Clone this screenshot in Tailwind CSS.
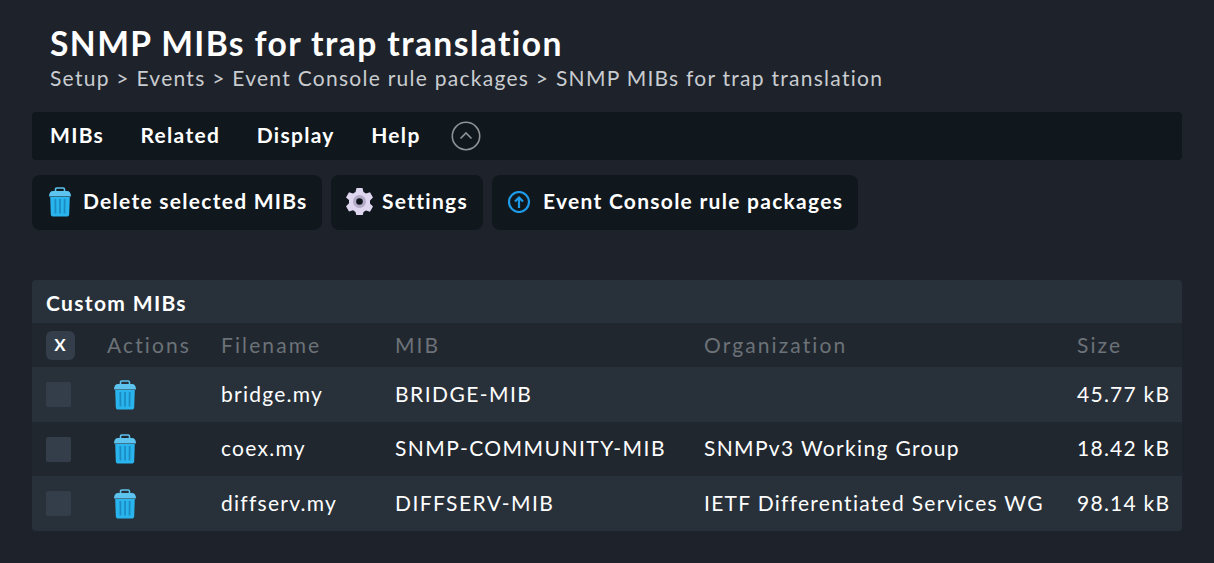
<!DOCTYPE html>
<html lang="en">
  <head>
    <meta charset="UTF-8" />
    <title>SNMP MIBs for trap translation</title>
    <script src="https://cdn.jsdelivr.net/npm/@tailwindcss/browser@4"></script>
  </head>
  <body class="bg-[#1e232b] h-[563px] overflow-hidden font-['Lato',sans-serif] text-white">
    <svg class="hidden">
      <symbol id="trash" viewBox="0 0 24 30">
        <path d="M7.500 4.500V2.400C7.500 1.600 8 1 8.800 1h6.400c.8 0 1.300.6 1.300 1.400v2.100" fill="none" stroke="#5cc4ef" stroke-width="1.600" />
        <path d="M1 9.500C1 6 2.500 4 5 4h14c2.500 0 4 2 4 5.500z" fill="#5cc4ef" />
        <path d="M2.200 10h19.600l-.6 17.200c0 1.500-1 2.300-2.500 2.300H5.300c-1.500 0-2.500-.8-2.500-2.300z" fill="#2ab4ee" />
        <path d="M7.300 12l.2 14.500M12 12v14.500M16.700 12l-.2 14.500" stroke="#1a8cc2" stroke-width="1.800" />
      </symbol>
    </svg>

    <header class="pl-[50px] pt-[23px] h-[112px]">
      <h1 class="text-[33.6px] leading-[40px] font-bold tracking-[1.43px]">SNMP MIBs for trap translation</h1>
      <p class="text-[21px] leading-[30px] tracking-[1.27px] text-[#c9ccd0]">Setup &gt; Events &gt; Event Console rule packages &gt; SNMP MIBs for trap translation</p>
    </header>

    <main class="mx-[32px]">
      <nav class="h-[48px] bg-[#10171d] rounded-[4px] flex items-center pl-[18px] gap-[36.5px] text-[21px] font-bold tracking-[1.3px]">
        <span class="pb-[2px]">MIBs</span>
        <span class="pb-[2px]">Related</span>
        <span class="pb-[2px]">Display</span>
        <span class="pb-[2px] -mr-[6px]">Help</span>
        <svg class="w-[30px] h-[30px] mb-[1px]" viewBox="0 0 30 30" fill="none">
          <circle cx="15" cy="15" r="13.700" stroke="#8f9396" stroke-width="1.600" />
          <path d="M9.500 17.500 15 12l5.500 5.500" stroke="#8f9396" stroke-width="1.600" />
        </svg>
      </nav>

      <div class="flex gap-[9px] mt-[15px] text-[21px] font-bold tracking-[1.27px]">
        <button class="h-[55px] w-[290px] bg-[#10171d] rounded-[8px] flex items-center pl-[16px] gap-[11px]">
          <svg class="w-[24px] h-[30px] mb-[2px]"><use href="#trash" /></svg>
          <span class="pb-[3px]">Delete selected MIBs</span>
        </button>
        <button class="h-[55px] w-[152px] bg-[#10171d] rounded-[8px] flex items-center pl-[15px] gap-[9px]">
          <svg class="w-[27px] h-[28px] mb-[3px]" viewBox="0 0 27 28">
            <path fill="#ded7ef" d="M10.500 1h6l1 4 2.500 1.400 4-1.200 3 5.300-3 2.900v3.200l3 2.900-3 5.300-4-1.200-2.500 1.400-1 4h-6l-1-4L7 23.300l-4 1.200-3-5.300 3-2.900V13L0 10.500l3-5.300 4 1.200 2.500-1.400z" />
            <circle cx="13.500" cy="14.500" r="6.500" fill="#b3abc8" />
            <circle cx="13.500" cy="14.500" r="3.300" fill="#10171d" />
          </svg>
          <span class="pb-[3px]">Settings</span>
        </button>
        <button class="h-[55px] w-[366px] bg-[#10171d] rounded-[8px] flex items-center pl-[16px] gap-[13px]">
          <svg class="w-[22px] h-[22px] mb-[2px]" viewBox="0 0 22 22" fill="none" stroke="#1e9be8" stroke-width="2.200">
            <circle cx="11" cy="11" r="10" />
            <path d="M11 17V7M7 10.500l4-4 4 4" />
          </svg>
          <span class="pb-[3px]">Event Console rule packages</span>
        </button>
      </div>

      <section class="mt-[50px] rounded-[4px] overflow-hidden text-[21px] leading-[24px] tracking-[1.26px]">
        <h2 class="h-[43px] bg-[#28313a] pl-[14px] pt-[2px] flex items-center font-bold tracking-[1.35px]">Custom MIBs</h2>
        <table class="w-full table-fixed">
          <thead>
            <tr class="h-[44px] bg-[#20272f] text-[#6c7278] text-left tracking-[2.1px]">
              <th class="w-[75px] pl-[14px] font-normal">
                <span class="w-[29px] h-[29px] rounded-[6px] bg-[#333e4a] flex items-center justify-center text-white font-bold text-[17px] tracking-normal pr-[1px]">X</span>
              </th>
              <th class="w-[114px] font-normal">Actions</th>
              <th class="w-[174px] font-normal">Filename</th>
              <th class="w-[309px] font-normal">MIB</th>
              <th class="w-[373px] font-normal">Organization</th>
              <th class="font-normal">Size</th>
            </tr>
          </thead>
          <tbody>
            <tr class="h-[55px] bg-[#28313a]">
              <td class="pl-[14px]"><span class="block w-[25px] h-[25px] rounded-[2px] bg-[#333e4a]"></span></td>
              <td><svg class="w-[24px] h-[30px] ml-[6px] block"><use href="#trash" /></svg></td>
              <td class="pb-[2px]">bridge.my</td>
              <td class="pb-[2px] tracking-[1.46px]">BRIDGE-MIB</td>
              <td class="pb-[2px]"></td>
              <td class="pb-[2px]">45.77 kB</td>
            </tr>
            <tr class="h-[54px] bg-[#20272f]">
              <td class="pl-[14px]"><span class="block w-[25px] h-[25px] rounded-[2px] bg-[#333e4a]"></span></td>
              <td><svg class="w-[24px] h-[30px] ml-[6px] block"><use href="#trash" /></svg></td>
              <td class="pb-[2px]">coex.my</td>
              <td class="pb-[2px] tracking-[1.46px]">SNMP-COMMUNITY-MIB</td>
              <td class="pb-[2px] tracking-[1.33px]">SNMPv3 Working Group</td>
              <td class="pb-[2px]">18.42 kB</td>
            </tr>
            <tr class="h-[55px] bg-[#28313a]">
              <td class="pl-[14px]"><span class="block w-[25px] h-[25px] rounded-[2px] bg-[#333e4a]"></span></td>
              <td><svg class="w-[24px] h-[30px] ml-[6px] block"><use href="#trash" /></svg></td>
              <td class="pb-[2px]">diffserv.my</td>
              <td class="pb-[2px] tracking-[1.46px]">DIFFSERV-MIB</td>
              <td class="pb-[2px] tracking-[1.29px]">IETF Differentiated Services WG</td>
              <td class="pb-[2px]">98.14 kB</td>
            </tr>
          </tbody>
        </table>
      </section>
    </main>
  </body>
</html>
